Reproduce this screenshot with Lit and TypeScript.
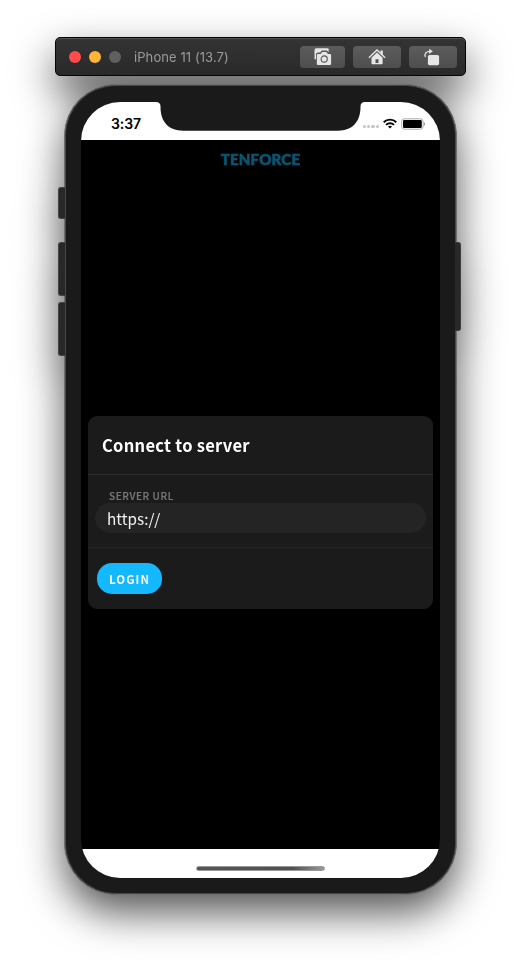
import { LitElement, html, css } from "lit";
import { customElement } from "lit/decorators.js";

const cameraIcon = html`<svg class="tool-icon" width="20" height="18" viewBox="0 0 20 18">
  <path fill="#e6e6e6" d="M3.300 .2h11.400a1 1 0 0 1 1 1v2.300l-.6 .2-1.200-1.300H8.700L7.200 4.500H5q-2 0-2 2v4.600L1.500 11.500V2.200a2 2 0 0 1 1.800-2z"/>
  <path fill="#e6e6e6" d="M5 6h2.700l1.500-2h4.200l1.500 2h2q1.200 0 1.200 1.200v8.600q0 1.200-1.200 1.200H5q-1.200 0-1.200-1.200V7.200Q3.800 6 5 6z"/>
  <circle cx="11.200" cy="11" r="3.100" fill="none" stroke="#555" stroke-width="1.100"/>
</svg>`;

const homeIcon = html`<svg class="tool-icon" width="20" height="18" viewBox="0 0 20 18">
  <path fill="none" stroke="#e6e6e6" stroke-width="1.400" d="M1.900 9.700 10 2 18.100 9.700"/>
  <path fill="#e6e6e6" d="M13.500 2.600h2.400v4.400l-2.400-2.300z"/>
  <path fill="#e6e6e6" fill-rule="evenodd" d="M10 4.400l5.600 5.400v5.700q0 .8-.8 .8H5.300q-.8 0-.8-.8V9.800zM8.500 11.200v3.900h3v-3.900z"/>
</svg>`;

const rotateIcon = html`<svg class="tool-icon" width="20" height="18" viewBox="0 0 20 18">
  <rect x="4.900" y="6.900" width="11.200" height="10.300" rx="1.600" fill="#e6e6e6"/>
  <path fill="none" stroke="#e6e6e6" stroke-width="1.300" d="M2.400 9C1 6 2.800 3.300 7 3.300"/>
  <path fill="#e6e6e6" d="M6.200 .8l3.600 2.500-3.600 2.600z"/>
</svg>`;

const wifiIcon = html`<svg class="wifi" width="14" height="11" viewBox="0 0 14 11">
  <g fill="none" stroke="#000" stroke-width="1.900">
    <path d="M.7 4.200a9 9 0 0 1 12.600 0"/>
    <path d="M3 6.900a5.700 5.700 0 0 1 8 0"/>
  </g>
  <path d="M7 10.500 5 8.600a2.900 2.900 0 0 1 4 0z"/>
</svg>`;

@customElement("app-root")
export class AppRoot extends LitElement {
  static styles = css`
    :host {
      display: block;
      width: 521px;
      height: 969px;
      overflow: hidden;
      background: #fff;
      font-family: "Noto Sans CJK JP", "Noto Sans", sans-serif;
    }
    * { box-sizing: border-box; }
    .simulator {
      display: flex;
      flex-direction: column;
      align-items: center;
      gap: 8px;
      padding-top: 37px;
      filter: drop-shadow(0 18px 20px rgba(0, 0, 0, 0.66));
    }
    .titlebar {
      width: 411px;
      height: 39px;
      display: flex;
      align-items: center;
      padding: 0 8px 0 13px;
      border: 1px solid #050505;
      border-radius: 5px;
      background: linear-gradient(#343434, #292929);
      box-shadow: inset 0 1px 0 #525252;
    }
    .light { width: 12px; height: 12px; border-radius: 50%; margin-right: 8px; }
    .close { background: #ff4b4a; }
    .minimise { background: #ffb436; }
    .zoom { background: #606060; }
    .device {
      margin-left: 5px;
      flex: 1;
      font: 13px/20px Inter, sans-serif;
      letter-spacing: 0.08px;
      color: #9b9b9b;
      white-space: nowrap;
    }
    .tool {
      width: 48px;
      height: 22px;
      margin-left: 8px;
      display: flex;
      align-items: center;
      justify-content: center;
      border-radius: 4px;
      background: linear-gradient(#5c5c5c, #4e4e4e);
    }
    .tool.first { width: 45px; }
    .phone {
      position: relative;
      width: 393px;
      height: 811px;
      padding: 17px 16px 16px;
      border: 1px solid #707070;
      border-radius: 52px;
      background: #1a1a1a;
      box-shadow: inset 0 0 0 1px #474747;
    }
    .key {
      position: absolute;
      width: 7px;
      left: -7px;
      border-radius: 3px 0 0 3px;
      border: 1px solid #444;
      border-right: 0;
      background: #282828;
    }
    .mute { top: 102px; height: 32px; }
    .volume-up { top: 157px; height: 54px; }
    .volume-down { top: 217px; height: 54px; }
    .power {
      left: auto;
      right: -5px;
      top: 157px;
      width: 6px;
      height: 89px;
      border: 1px solid #3c3c3c;
      border-left: 0;
      border-radius: 0 3px 3px 0;
    }
    .screen {
      position: relative;
      width: 359px;
      height: 776px;
      display: flex;
      flex-direction: column;
      overflow: hidden;
      border-radius: 39px;
      background: #000;
    }
    .status {
      height: 38px;
      flex: none;
      display: flex;
      justify-content: space-between;
      padding: 12px 15px 0 30px;
      background: #fff;
    }
    .clock {
      font: 600 14px/19px Inter, sans-serif;
      letter-spacing: -0.1px;
      color: #000;
    }
    .indicators { display: flex; height: 19px; align-items: center; }
    .signal { display: flex; gap: 1px; margin: 6px 4px 0 0; }
    .dot { width: 3.300px; height: 3.300px; border-radius: 50%; background: #c4c4c4; }
    .wifi { margin: 0 4px 1px 0; }
    .notch { position: absolute; top: 0; left: 75px; display: block; }
    .app { flex: 1; display: flex; flex-direction: column; align-items: center; }
    .logo {
      height: 38px;
      font: 900 15px/38px Lato, sans-serif;
      letter-spacing: 0.2px;
      color: #075673;
      -webkit-text-stroke: 0.6px #075673;
      white-space: nowrap;
    }
    .card {
      width: 345px;
      height: 193px;
      margin-top: 238px;
      border-radius: 9px;
      background: #1b1b1b;
      color: #fff;
    }
    .heading {
      height: 59px;
      margin: 0;
      padding-left: 14px;
      border-bottom: 1px solid #2c2c2c;
      font-size: 16.500px;
      line-height: 59px;
      font-weight: 700;
      letter-spacing: 0.270px;
    }
    .field {
      display: flex;
      flex-direction: column;
      height: 73px;
      padding: 14px 7px 0;
      border-bottom: 1px solid #262626;
    }
    .label {
      height: 14px;
      padding-left: 14px;
      font-size: 10px;
      line-height: 14px;
      font-weight: 500;
      letter-spacing: 0.600px;
      color: #777;
      -webkit-text-stroke: 0.2px #777;
    }
    .input {
      height: 30px;
      padding-left: 12px;
      border-radius: 15px;
      background: #242424;
      font-size: 15.300px;
      line-height: 30px;
      color: #f2f2f2;
    }
    .login {
      width: 65px;
      height: 31px;
      margin: 15px 0 0 9px;
      padding: 0;
      border: 0;
      border-radius: 15px;
      background: #13b8ff;
      color: #fff;
      font: 700 11.500px/30px "Noto Sans CJK JP", sans-serif;
      letter-spacing: 1.100px;
    }
    .bottom {
      height: 29px;
      flex: none;
      display: flex;
      justify-content: center;
      padding: 17px 0 0;
      background: #fff;
    }
    .handle {
      width: 129px;
      height: 5px;
      border-radius: 3px;
      border: 1px solid #999;
      background: linear-gradient(90deg, #555, #505050 75%, #999);
    }
  `;

  render() {
    return html`<div class="simulator">
      <header class="titlebar">
        <span class="light close"></span>
        <span class="light minimise"></span>
        <span class="light zoom"></span>
        <span class="device">iPhone 11 (13.7)</span>
        <span class="tool first">${cameraIcon}</span>
        <span class="tool">${homeIcon}</span>
        <span class="tool">${rotateIcon}</span>
      </header>
      <section class="phone">
        <span class="key mute"></span>
        <span class="key volume-up"></span>
        <span class="key volume-down"></span>
        <span class="key power"></span>
        <div class="screen">
          <div class="status">
            <span class="clock">3:37</span>
            <div class="indicators">
              <span class="signal">${[0, 1, 2, 3].map(() => html`<i class="dot"></i>`)}</span>
              ${wifiIcon}
              <svg width="24" height="12" viewBox="0 0 24 12">
                <rect x=".7" y=".8" width="21.400" height="10.400" rx="2.600" fill="none" stroke="#aaa"/>
                <rect x="2" y="2" width="18.800" height="8" rx="1.300"/>
                <path d="M22.900 4v4q1-.6 1-2t-1-2z" fill="#888"/>
              </svg>
            </div>
          </div>
          <svg class="notch" width="209" height="29" viewBox="0 0 209 29">
            <path fill="#1a1a1a" d="M0 0Q4.500 0 4.500 4.500V5C4.500 20 13 28.700 27 28.700H182C196 28.700 204.500 20 204.500 5V4.500Q204.500 0 209 0z"/>
          </svg>
          <main class="app">
            <div class="logo">TENFORCE</div>
            <section class="card">
              <h1 class="heading">Connect to server</h1>
              <div class="field">
                <span class="label">SERVER URL</span>
                <div class="input">https://</div>
              </div>
              <button class="login">LOGIN</button>
            </section>
          </main>
          <div class="bottom"><span class="handle"></span></div>
        </div>
      </section>
    </div>`;
  }
}
